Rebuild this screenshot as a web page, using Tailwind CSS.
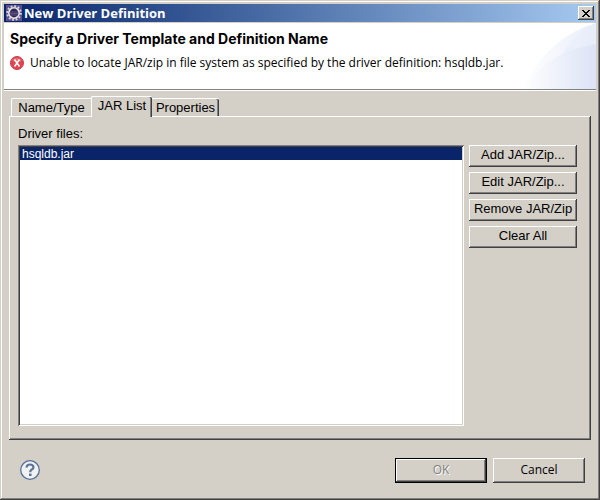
<!DOCTYPE html>
<html lang="en">
<head>
<meta charset="utf-8">
<title>New Driver Definition</title>
<script src="https://cdn.jsdelivr.net/npm/@tailwindcss/browser@4"></script>
</head>
<body class="bg-[#d4d0c8] text-black font-['Liberation_Sans',Arial,sans-serif] text-[13px]">
<div class="min-h-screen flex flex-col p-1 bg-[#d4d0c8] shadow-[inset_-1px_-1px_0_#404040,inset_1px_1px_0_#d4d0c8,inset_-2px_-2px_0_#808080,inset_2px_2px_0_#fff]">
  <header class="h-[18px] flex items-center pl-[2px] pr-[2px] gap-[2px] bg-linear-to-r from-[#0a246a] to-[#a6caf0]">
    <svg class="size-4 shrink-0" viewBox="0 0 16 16" aria-hidden="true">
      <rect width="16" height="16" fill="#5b4f8c"/>
      <circle cx="8" cy="8" r="6.8" fill="none" stroke="#d8d6dc" stroke-width="2" stroke-dasharray="1.78 1.78"/>
      <circle cx="8" cy="8" r="5.2" fill="#30264e" stroke="#e6e4e8" stroke-width="1.6"/>
      <path d="M4 7h8M3.700 8.500h8.600M4 10h8" stroke="#685f92" stroke-width=".8"/>
    </svg>
    <h1 class="flex-1 text-white font-bold text-[13px] leading-4 font-['Open_Sans','Noto_Sans',sans-serif]">New Driver Definition</h1>
    <button type="button" aria-label="Close" class="w-4 h-[14px] grid place-items-center bg-[#d4d0c8] shadow-[inset_-1px_-1px_0_#404040,inset_1px_1px_0_#fff,inset_-2px_-2px_0_#808080]">
      <svg class="w-2 h-[7px]" viewBox="0 0 8 7" shape-rendering="crispEdges" aria-hidden="true"><path d="M0 0h2v1h1v1h2v-1h1v-1h2v1h-1v1h-1v1h-1v1h1v1h1v1h1v1h-2v-1h-1v-1h-2v1h-1v1h-2v-1h1v-1h1v-1h1v-1h-1v-1h-1v-1h-1z"/></svg>
    </button>
  </header>
  <section class="relative h-[67px] mt-px pt-2 pl-[6px] bg-white border-b border-[#808080] shadow-[0_1px_0_#fff]">
    <svg class="absolute right-0 top-0 w-[76px] h-full" viewBox="0 0 76 68" preserveAspectRatio="none" aria-hidden="true">
      <defs>
        <linearGradient id="a"><stop offset="0" stop-color="#fff"/><stop offset="1" stop-color="#e9eefa"/></linearGradient>
        <linearGradient id="b"><stop offset="0" stop-color="#fff"/><stop offset="1" stop-color="#dce3f6"/></linearGradient>
      </defs>
      <path d="M2 68Q28 14 76 0V68z" fill="url(#a)"/>
      <path d="M26 68Q43 14 76 0V68z" fill="#e6ecfa" opacity=".4"/>
      <path d="M2 68Q30 28 76 22V68z" fill="url(#b)"/>
    </svg>
    <h2 class="relative font-bold text-[14px] leading-4 font-['Inter','Liberation_Sans',sans-serif]">Specify a Driver Template and Definition Name</h2>
    <p class="relative mt-2 flex items-center gap-[6px] text-[12px] leading-4 font-['Open_Sans','Noto_Sans',sans-serif]">
      <svg class="size-[14px] shrink-0" viewBox="0 0 14 14" aria-hidden="true">
        <circle cx="7" cy="7" r="6.500" fill="#e14450" stroke="#c9404b"/>
        <path d="M2 5a5.500 5.500 0 0 1 10 0q-5 2-10 0" fill="#f08a90" opacity=".5"/>
        <path d="M4.500 3.500l5 7M9.500 3.500l-5 7" stroke="#fff" stroke-width="1.600"/>
      </svg>
      <span class="whitespace-nowrap">Unable to locate JAR/zip in file system as specified by the driver definition: hsqldb.jar.</span>
    </p>
  </section>
  <main class="flex-1 flex flex-col pt-[6px] px-[5px]">
    <div role="tablist" class="relative z-10 flex items-end pl-[2px] h-5">
      <button role="tab" type="button" class="w-20 h-[18px] leading-4 border-t border-l border-white rounded-tl-[2px]">Name/Type</button>
      <button role="tab" type="button" aria-selected="true" class="w-[61px] h-[21px] -mb-px pb-[2px] leading-4 bg-[#d4d0c8] border-t border-l border-white rounded-t-[2px] shadow-[inset_-1px_0_0_#404040,inset_-2px_0_0_#808080]">JAR List</button>
      <button role="tab" type="button" class="w-[67px] h-[18px] leading-4 border-t border-white rounded-tr-[2px] shadow-[inset_-1px_0_0_#404040,inset_-2px_0_0_#808080]">Properties</button>
    </div>
    <div role="tabpanel" class="flex-1 flex flex-col pt-[10px] pl-[9px] pr-[14px] pb-[14px] shadow-[inset_-1px_-1px_0_#404040,inset_1px_1px_0_#fff,inset_-2px_-2px_0_#808080]">
      <label for="files" class="leading-4 mb-[3px]">Driver files:</label>
      <div class="flex-1 flex gap-[5px]">
        <select id="files" size="10" class="flex-1 min-w-0 p-[2px] bg-white overflow-hidden rounded-none appearance-none text-[12px] shadow-[inset_1px_1px_0_#808080,inset_-1px_-1px_0_#fff,inset_2px_2px_0_#404040,inset_-2px_-2px_0_#d4d0c8]">
          <option class="bg-[#0a246a] text-white px-[2px] py-0 min-h-0 h-[13px]">hsqldb.jar</option>
        </select>
        <div class="w-[108px] flex flex-col gap-[5px]">
          <button type="button" class="h-[22px] pb-[2px] shadow-[inset_-1px_-1px_0_#404040,inset_1px_1px_0_#fff,inset_-2px_-2px_0_#808080]">Add JAR/Zip...</button>
          <button type="button" class="h-[22px] pb-[2px] shadow-[inset_-1px_-1px_0_#404040,inset_1px_1px_0_#fff,inset_-2px_-2px_0_#808080]">Edit JAR/Zip...</button>
          <button type="button" class="h-[22px] pb-[2px] shadow-[inset_-1px_-1px_0_#404040,inset_1px_1px_0_#fff,inset_-2px_-2px_0_#808080]">Remove JAR/Zip</button>
          <button type="button" class="h-[22px] pb-[2px] shadow-[inset_-1px_-1px_0_#404040,inset_1px_1px_0_#fff,inset_-2px_-2px_0_#808080]">Clear All</button>
        </div>
      </div>
    </div>
  </main>
  <footer class="flex items-center gap-[6px] pt-[18px] pb-[13px] pl-4 pr-[11px] text-[12px] font-['Open_Sans','Noto_Sans',sans-serif]">
    <button type="button" aria-label="Help" class="mr-auto size-5 -mt-[2px]">
      <svg class="size-5" viewBox="0 0 20 20" aria-hidden="true">
        <circle cx="10" cy="10" r="9.300" fill="#f1f1f1" stroke="#536f9b" stroke-width="1.300"/>
        <path d="M6.500 7.500Q6.800 4.500 10 4.500T13.500 7.200Q13.500 8.700 11.500 9.700Q10.200 10.400 10.200 12.300" fill="none" stroke="#5b7299" stroke-width="2.200"/>
        <rect x="9" y="13.600" width="2.500" height="2.400" fill="#5b7299"/>
      </svg>
    </button>
    <button type="button" disabled class="w-[92px] h-[25px] pb-[2px] text-[#808080] [text-shadow:1px_1px_0_#fff] shadow-[inset_0_0_0_1px_#000,inset_-2px_-2px_0_#404040,inset_2px_2px_0_#fff,inset_-3px_-3px_0_#808080]">OK</button>
    <button type="button" class="w-[92px] h-[25px] pb-[2px] shadow-[inset_-1px_-1px_0_#404040,inset_1px_1px_0_#fff,inset_-2px_-2px_0_#808080]">Cancel</button>
  </footer>
</div>
</body>
</html>
